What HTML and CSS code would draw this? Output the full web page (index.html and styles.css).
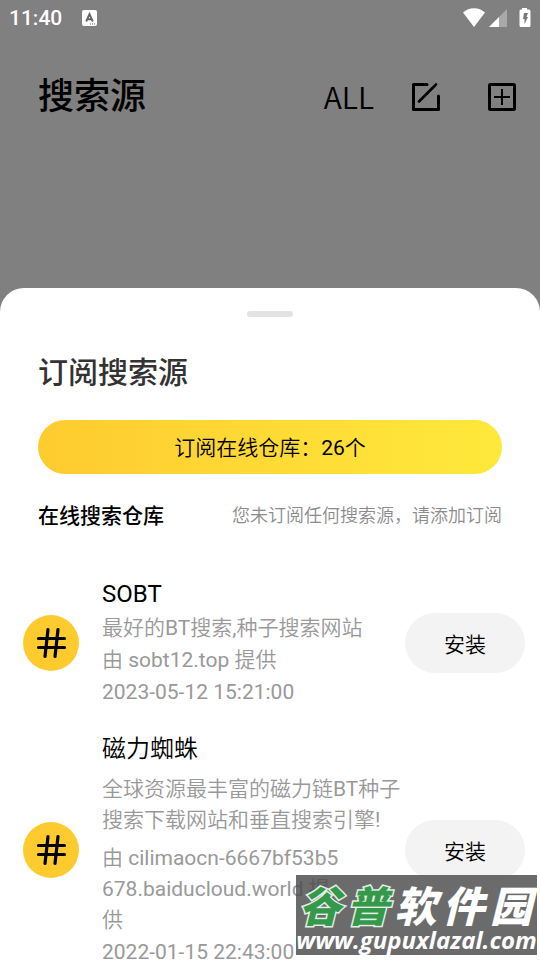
FILE: index.html
```html
<!DOCTYPE html>
<html lang="zh-CN">
<head>
<meta charset="utf-8">
<meta name="viewport" content="width=device-width, initial-scale=1">
<title>搜索源</title>
<link rel="stylesheet" href="styles.css">
</head>
<body>
<div class="app">
  <div class="status">
    <span class="clock">11:40</span>
    <svg class="ime" width="15" height="16" viewBox="0 0 15 16" aria-hidden="true">
      <rect width="15" height="16" rx="2" fill="#fff"/>
      <path d="M4.200 11.500 7.500 4l3.300 7.500M5.300 9.200h4.400" fill="none" stroke="#666" stroke-width="1.900"/>
      <path d="M8 14h1m1 0h1m1 0h1" stroke="#666" stroke-width="1"/>
    </svg>
    <svg class="signals" width="68" height="20" viewBox="0 0 68 20" aria-hidden="true">
      <path d="M0 4.500C6-1.300 16-1.300 22 4.500L11 19Z" fill="#fff"/>
      <path d="M26 19 44 1v18Z" fill="#a9a9a9"/>
      <path d="M26 19 36 9v10Z" fill="#fff"/>
      <path d="M59 0h5v1.500h2a1.500 1.500 0 0 1 1.500 1.500v14.500a1.500 1.500 0 0 1-1.500 1.500h-8a1.500 1.500 0 0 1-1.500-1.500V3a1.500 1.500 0 0 1 1.500-1.500h1Z" fill="#fff"/>
      <path d="M61 5h4l-1.500 4H65L61.500 16v-5H60Z" fill="#777"/>
    </svg>
  </div>
  <header class="topbar">
    <h1>搜索源</h1>
    <button class="all" type="button">ALL</button>
    <button class="icon-button" type="button" aria-label="编辑">
      <svg width="28" height="28" viewBox="0 0 28 28" fill="none" stroke="#000">
        <path d="M15 1.500H1.500v25h25V13" stroke-width="3" stroke-linejoin="round" stroke-linecap="round"/>
        <path d="M7 18.500 24 1.500" stroke-width="2.600" stroke-linecap="round"/>
      </svg>
    </button>
    <button class="icon-button" type="button" aria-label="添加">
      <svg width="28" height="28" viewBox="0 0 28 28" fill="none" stroke="#000">
        <rect x="1.500" y="1.500" width="25" height="25" rx="1" stroke-width="3"/>
        <path d="M14 6v16M6 14h16" stroke-width="2"/>
      </svg>
    </button>
  </header>

  <main class="sheet">
    <div class="handle"></div>
    <h2>订阅搜索源</h2>
    <button class="subscribe" type="button">订阅在线仓库：26个</button>
    <div class="section">
      <h3>在线搜索仓库</h3>
      <span class="hint">您未订阅任何搜索源，请添加订阅</span>
    </div>
    <ul class="sources">
      <li class="source">
        <svg class="badge" width="56" height="56" viewBox="0 0 56 56" aria-hidden="true">
          <circle cx="28" cy="28" r="28" fill="#fecb2f"/>
          <path d="M25 14.500 22 41.500M35 14.500 32 41.500M15.500 23.500h26M15.500 32.500h26" stroke="#000" stroke-width="3.200" stroke-linecap="round"/>
        </svg>
        <div class="info">
          <h4>SOBT</h4>
          <p>最好的BT搜索,种子搜索网站</p>
          <p>由 sobt12.top 提供</p>
          <p>2023-05-12 15:21:00</p>
        </div>
        <button class="install" type="button">安装</button>
      </li>
      <li class="source">
        <svg class="badge" width="56" height="56" viewBox="0 0 56 56" aria-hidden="true">
          <circle cx="28" cy="28" r="28" fill="#fecb2f"/>
          <path d="M25 14.500 22 41.500M35 14.500 32 41.500M15.500 23.500h26M15.500 32.500h26" stroke="#000" stroke-width="3.200" stroke-linecap="round"/>
        </svg>
        <div class="info">
          <h4>磁力蜘蛛</h4>
          <p class="long">全球资源最丰富的磁力链BT种子<br>搜索下载网站和垂直搜索引擎!</p>
          <p class="long">由 cilimaocn-6667bf53b5<br>678.baiducloud.world 提<br>供</p>
          <p>2022-01-15 22:43:00</p>
        </div>
        <button class="install" type="button">安装</button>
      </li>
    </ul>
  </main>

  <div class="watermark">
    <div class="brand"><span class="green">谷</span><span class="green">普</span><span>软</span><span>件</span><span>园</span></div>
    <div class="site">www.gupuxlazal.com</div>
  </div>
</div>
</body>
</html>
```

FILE: styles.css
```css
* { box-sizing: border-box; }
body {
  margin: 0;
  background: #808080;
  color: #000;
  font-family: Roboto, "Noto Sans CJK SC DemiLight", "Noto Sans CJK SC", sans-serif;
}
h1, h2, h3, h4, p, ul { margin: 0; padding: 0; }
h1, h2, h3 { font-family: Roboto, "Noto Sans CJK SC", sans-serif; }
button {
  border: 0;
  padding: 0;
  background: none;
  color: inherit;
  font: inherit;
}
svg { display: block; flex: none; }
.app {
  position: relative;
  display: flex;
  flex-direction: column;
  height: 100vh;
  overflow: hidden;
}
.status {
  display: flex;
  align-items: center;
  height: 36px;
  padding: 0 9px;
  color: #fff;
  flex: none;
}
.clock { font-size: 21px; font-weight: 500; line-height: 36px; }
.ime { margin-left: 20px; }
.signals { margin-left: auto; }
.topbar {
  display: flex;
  align-items: center;
  height: 122px;
  padding: 0 24px 0 38px;
  margin-bottom: 130px;
  flex: none;
}
.topbar h1 {
  flex: 1;
  font-size: 36px;
  font-weight: 500;
  line-height: 48px;
}
.all {
  padding-bottom: 2px;
  font-family: "Noto Sans CJK SC DemiLight", "Noto Sans CJK SC", sans-serif;
  font-size: 30px;
  line-height: 40px;
}
.icon-button { margin-left: 48px; }
.icon-button:nth-of-type(2) { margin-left: 38px; }
.sheet {
  flex: 1 0 auto;
  padding: 23px 15px 0;
  background: #fff;
  border-radius: 24px 24px 0 0;
}
.handle {
  width: 46px;
  height: 6px;
  margin: 0 auto;
  border-radius: 3px;
  background: #e3e3e3;
}
.sheet h2 {
  margin: 34px 23px 25px;
  color: #333;
  font-size: 30px;
  font-weight: 500;
  line-height: 44px;
}
.subscribe {
  display: block;
  width: calc(100% - 46px);
  height: 54px;
  margin: 0 23px;
  padding-bottom: 2px;
  border-radius: 27px;
  background: linear-gradient(90deg, #fecb2f, #ffe93b);
  font-size: 21px;
}
.section {
  display: flex;
  align-items: center;
  justify-content: space-between;
  height: 32px;
  margin: 24px 23px 47px;
}
.section h3 { font-size: 21px; font-weight: 500; }
.hint { color: #8c8c8c; font-size: 18px; }
.sources { list-style: none; }
.source {
  display: flex;
  align-items: center;
  margin-bottom: 24px;
  padding-left: 8px;
}
.info {
  flex: 1;
  min-width: 0;
  margin-left: 23px;
  white-space: nowrap;
}
.info h4 { font-size: 24px; font-weight: 400; line-height: 35px; }
.info p {
  margin-top: 1px;
  color: #999;
  font-size: 21px;
  line-height: 31px;
}
.info .long { margin-top: 7px; }
.install {
  flex: none;
  width: 120px;
  height: 60px;
  border-radius: 30px;
  background: #f3f3f3;
  font-size: 21px;
}
.watermark {
  position: absolute;
  right: 3px;
  bottom: 5px;
  width: 241px;
  height: 80px;
  padding-top: 8px;
  background: rgba(75, 75, 75, 0.82);
  color: #fff;
  text-align: center;
  white-space: nowrap;
}
.brand {
  display: flex;
  justify-content: space-between;
  padding: 0 5px 0 3px;
  font-family: "Noto Sans CJK SC", sans-serif;
  font-size: 42px;
  font-style: italic;
  font-weight: 900;
  line-height: 42px;
}
.green {
  color: #35994b;
  -webkit-text-stroke: 3px #e4efe6;
  paint-order: stroke fill;
}
.site {
  font-family: "Open Sans", sans-serif;
  font-size: 24px;
  font-style: italic;
  font-weight: 700;
  line-height: 30px;
}
```
